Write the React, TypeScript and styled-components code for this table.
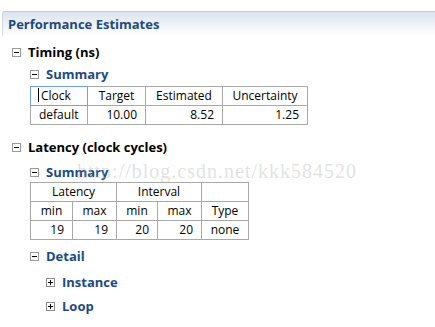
import { ReactNode } from "react";
import styled, { createGlobalStyle } from "styled-components";

const GlobalStyle = createGlobalStyle`
  html, body {
    margin: 0;
    padding: 0;
    background: #ffffff;
  }
  body {
    font-family: "Open Sans", "Noto Sans", "DejaVu Sans", sans-serif;
    font-size: 12px;
    color: #000000;
  }
`;

const Page = styled.div`
  position: relative;
  width: 435px;
  height: 327px;
  padding-top: 11px;
  box-sizing: border-box;
  overflow: hidden;
`;

// panel caption with the pale blue fade
const Caption = styled.div`
  margin-left: 2px;
  height: 24px;
  border-top: 1px solid #c3c9d3;
  border-left: 1px solid #d3d8e0;
  border-top-left-radius: 3px;
  background: linear-gradient(#dce3ef, #ffffff);
  display: flex;
  align-items: center;
  padding-left: 5px;
  font-weight: 700;
  font-size: 13px;
  color: #1d4a80;
`;

const Body = styled.div`
  display: flex;
  flex-direction: column;
  align-items: flex-start;
`;

const NodeRow = styled.div<{ $level: number; $top: number; $h: number }>`
  display: flex;
  align-items: center;
  gap: 7px;
  height: ${(p) => p.$h}px;
  margin-top: ${(p) => p.$top}px;
  padding-left: ${(p) => 12 + p.$level * 18 - (p.$level > 1 ? 2 : 0)}px;
`;

const Toggle = styled.span<{ $open: boolean }>`
  position: relative;
  flex: none;
  width: 7px;
  height: 7px;
  border: 1px solid ${(p) => (p.$open ? "#9a9a9a" : "#8a8a8a")};
  background: #ffffff;

  &::before {
    content: "";
    position: absolute;
    left: 1px;
    top: 3px;
    width: 5px;
    height: 1px;
    background: #000000;
  }

  &::after {
    content: "";
    display: ${(p) => (p.$open ? "none" : "block")};
    position: absolute;
    left: 3px;
    top: 1px;
    width: 1px;
    height: 5px;
    background: #000000;
  }
`;

const Label = styled.span<{ $dark?: boolean }>`
  font-weight: 700;
  font-size: 13px;
  color: ${(p) => (p.$dark ? "#000000" : "#1d4a80")};
  white-space: nowrap;
`;

const Grid = styled.table<{ $top?: number }>`
  margin-left: 30px;
  margin-top: ${(p) => p.$top ?? 0}px;
  border-collapse: collapse;
  table-layout: fixed;
  font-size: 12px;
`;

const Cell = styled.td<{ $align?: "left" | "right" | "center"; $focus?: boolean }>`
  height: 19px;
  padding: 0 8px;
  border: 1px solid ${(p) => (p.$focus ? "#6fa3dc" : "#a8a8a8")};
  text-align: ${(p) => p.$align ?? "center"};
  box-sizing: border-box;
  white-space: nowrap;
  line-height: 18px;
`;

const Caret = styled.span`
  display: inline-block;
  width: 1px;
  height: 14px;
  background: #000000;
  margin-left: -1px;
  margin-right: 2px;
  vertical-align: -2px;
`;

const Watermark = styled.div`
  position: absolute;
  left: 77px;
  top: 160px;
  font-family: "Liberation Serif", "DejaVu Serif", serif;
  font-size: 20px;
  letter-spacing: 1px;
  color: rgba(170, 170, 170, 0.36);
  pointer-events: none;
  white-space: nowrap;
`;

type NodeProps = {
  level: number;
  top: number;
  h?: number;
  open?: boolean;
  dark?: boolean;
  children: ReactNode;
};

const Node = ({ level, top, h = 22, open = true, dark, children }: NodeProps) => (
  <NodeRow $level={level} $top={top} $h={h}>
    <Toggle $open={open} />
    <Label $dark={dark}>{children}</Label>
  </NodeRow>
);

export default function App() {
  return (
    <Page>
      <GlobalStyle />
      <Caption>Performance Estimates</Caption>
      <Body>
        <Node level={0} top={5} dark>
          Timing (ns)
        </Node>
        <Node level={1} top={0}>
          Summary
        </Node>
        <Grid $top={1}>
          <colgroup>
            <col style={{ width: 57 }} />
            <col style={{ width: 58 }} />
            <col style={{ width: 77 }} />
            <col style={{ width: 85 }} />
          </colgroup>
          <tbody>
            <tr>
              <Cell $align="left" $focus>
                <Caret />
                Clock
              </Cell>
              <Cell>Target</Cell>
              <Cell>Estimated</Cell>
              <Cell>Uncertainty</Cell>
            </tr>
            <tr>
              <Cell $align="left">default</Cell>
              <Cell $align="right">10.00</Cell>
              <Cell $align="right">8.52</Cell>
              <Cell $align="right">1.25</Cell>
            </tr>
          </tbody>
        </Grid>
        <Node level={0} top={11} dark>
          Latency (clock cycles)
        </Node>
        <Node level={1} top={4} h={20}>
          Summary
        </Node>
        <Grid>
          <colgroup>
            <col style={{ width: 42 }} />
            <col style={{ width: 44 }} />
            <col style={{ width: 41 }} />
            <col style={{ width: 44 }} />
            <col style={{ width: 47 }} />
          </colgroup>
          <tbody>
            <tr>
              <Cell colSpan={2}>Latency</Cell>
              <Cell colSpan={2}>Interval</Cell>
              <Cell />
            </tr>
            <tr>
              <Cell>min</Cell>
              <Cell>max</Cell>
              <Cell>min</Cell>
              <Cell>max</Cell>
              <Cell>Type</Cell>
            </tr>
            <tr>
              <Cell $align="right">19</Cell>
              <Cell $align="right">19</Cell>
              <Cell $align="right">20</Cell>
              <Cell $align="right">20</Cell>
              <Cell>none</Cell>
            </tr>
          </tbody>
        </Grid>
        <Node level={1} top={6} h={20}>
          Detail
        </Node>
        <Node level={2} top={6} h={20} open={false}>
          Instance
        </Node>
        <Node level={2} top={4} h={20} open={false}>
          Loop
        </Node>
      </Body>
      <Watermark>http://blog.csdn.net/kkk584520</Watermark>
    </Page>
  );
}
